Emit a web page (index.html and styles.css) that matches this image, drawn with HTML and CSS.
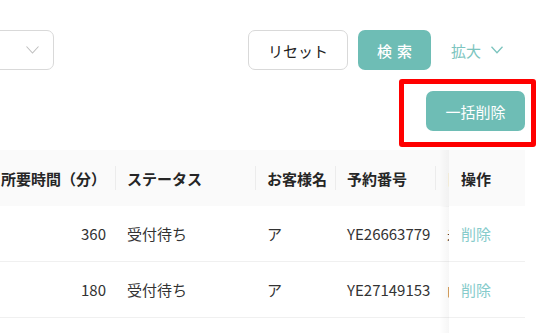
FILE: index.html
```html
<!DOCTYPE html>
<html lang="ja">
<head>
<meta charset="utf-8">
<link rel="stylesheet" href="styles.css">
</head>
<body>
<div class="page">
  <div class="toolbar">
    <div class="select">
      <svg class="chev" width="13" height="8" viewBox="0 0 13 8"><path d="M0.5 0.5 L6.5 7 L12.5 0.5" fill="none" stroke="#bfbfbf" stroke-width="1.1"/></svg>
    </div>
    <div class="actions">
      <button class="btn btn-default">リセット</button>
      <button class="btn btn-primary btn-two">検索</button>
      <button class="btn-link">拡大<svg class="chev-link" width="12" height="8" viewBox="0 0 12 8"><path d="M0.5 0.8 L6 6.8 L11.5 0.8" fill="none" stroke="#7cc4be" stroke-width="1.3"/></svg></button>
    </div>
  </div>
  <div class="bulkrow">
    <span class="highlight-wrap">
      <button class="btn btn-primary btn-bulk">一括削除</button>
      <span class="highlight"></span>
    </span>
  </div>
  <div class="table">
    <div class="th num">所要時間（分）</div>
    <div class="th">ステータス</div>
    <div class="th">お客様名</div>
    <div class="th">予約番号</div>
    <div class="th clip">日時</div>
    <div class="th fixed">操作</div>

    <div class="td num">360</div>
    <div class="td">受付待ち</div>
    <div class="td">ア</div>
    <div class="td">YE26663779</div>
    <div class="td clip">未</div>
    <div class="td fixed"><a class="link">削除</a></div>

    <div class="td num">180</div>
    <div class="td">受付待ち</div>
    <div class="td">ア</div>
    <div class="td">YE27149153</div>
    <div class="td clip">山</div>
    <div class="td fixed"><a class="link">削除</a></div>

    <div class="td num"></div>
    <div class="td"></div>
    <div class="td"></div>
    <div class="td"></div>
    <div class="td clip"></div>
    <div class="td fixed"></div>
  </div>
</div>
</body>
</html>
```
FILE: styles.css
```css
* { box-sizing: border-box; }
html, body { margin: 0; padding: 0; background: #fff; overflow: hidden; }
body {
  font-family: "Noto Sans CJK JP", "Noto Sans", sans-serif;
  font-size: 15px;
  color: #333;
}
.page {
  width: 549px;
  margin-left: -24px;
  padding-top: 30px;
}
.toolbar {
  display: flex;
  justify-content: space-between;
  align-items: center;
  height: 40px;
}
.select {
  width: 78px;
  height: 40px;
  border: 1px solid #d9d9d9;
  border-radius: 7px;
  display: flex;
  align-items: center;
  justify-content: flex-end;
  padding-right: 14px;
}
.chev { display: block; }
.actions {
  display: flex;
  align-items: center;
}
.btn {
  font-family: inherit;
  font-size: 15px;
  height: 40px;
  border-radius: 7px;
  cursor: pointer;
  padding: 0;
}
.btn-default {
  width: 100px;
  background: #fff;
  border: 1px solid #d9d9d9;
  color: #222;
  margin-right: 10px;
}
.btn-primary {
  background: #6ebdb5;
  border: none;
  color: #fff;
}
.btn-two {
  width: 73px;
  letter-spacing: 0.34em;
  text-indent: 0.34em;
  font-weight: 500;
}
.btn-link {
  font-family: inherit;
  font-size: 15px;
  background: none;
  border: none;
  color: #7cc4be;
  padding: 0;
  margin-left: 20px;
  margin-right: 22px;
  display: flex;
  align-items: center;
  gap: 10px;
  height: 40px;
}
.chev-link { display: block; }
.bulkrow {
  display: flex;
  justify-content: flex-end;
  margin-top: 21px;
}
.highlight-wrap {
  position: relative;
  display: block;
}
.btn-bulk {
  display: block;
  width: 99px;
}
.highlight {
  position: absolute;
  left: -27px;
  right: -11px;
  top: -12px;
  bottom: -16px;
  border: 5px solid #ff0000;
  border-radius: 3px;
}
.table {
  margin-top: 19px;
  display: grid;
  grid-template-columns: 140px 140px 80px 100px 13px 76px;
  grid-auto-rows: 56px;
}
.th, .td {
  display: flex;
  align-items: center;
  padding: 0 11px;
  white-space: nowrap;
  overflow: hidden;
  border-bottom: 1px solid #f0f0f0;
}
.th {
  background: #fafafa;
  font-weight: 700;
  color: #262626;
  position: relative;
  border-bottom: none;
}
.th::before {
  content: "";
  position: absolute;
  right: 0;
  top: 50%;
  width: 1px;
  height: 24px;
  margin-top: -12px;
  background: #ececec;
}
.th.fixed::before, .th.clip::before { display: none; }
.num { justify-content: flex-end; padding-right: 10px; }
.clip { padding-left: 11px; overflow: hidden; }
.fixed {
  position: relative;
  overflow: visible;
  padding-left: 12px;
  background: #fff;
}
.th.fixed { background: #fafafa; }
.fixed::after {
  content: "";
  position: absolute;
  left: -10px;
  top: 0;
  bottom: -1px;
  width: 10px;
  background: linear-gradient(to right, rgba(0,0,0,0), rgba(0,0,0,0.035));
}
.td.fixed:last-child { border-bottom: none; }
.link {
  color: #86cbcb;
  cursor: pointer;
}
```
